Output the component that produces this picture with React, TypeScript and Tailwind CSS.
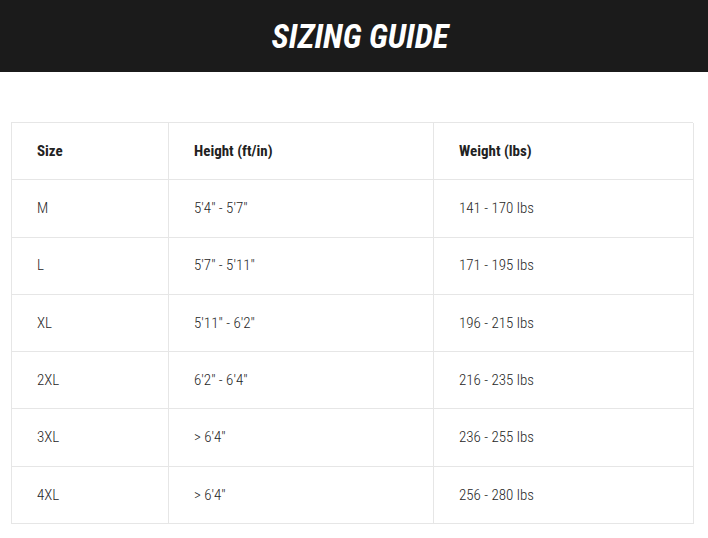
export default function App() {
  const rows = [
    ["M", "5'4\" - 5'7\"", "141 - 170 lbs"],
    ["L", "5'7\" - 5'11\"", "171 - 195 lbs"],
    ["XL", "5'11\" - 6'2\"", "196 - 215 lbs"],
    ["2XL", "6'2\" - 6'4\"", "216 - 235 lbs"],
    ["3XL", "> 6'4\"", "236 - 255 lbs"],
    ["4XL", "> 6'4\"", "256 - 280 lbs"],
  ];
  return (
    <div className="w-[708px] h-[538px] bg-white font-['Roboto',sans-serif] font-stretch-condensed">
      <div className="h-[72px] bg-[#1b1b1b] flex items-center justify-center pl-[12px]">
        <h1 className="text-white italic font-bold text-[33px] leading-none pt-[1px]">SIZING GUIDE</h1>
      </div>
      <div className="pt-[50px] pl-[11px]">
        <div className="w-[682px] border-t border-l border-[#e6e6e6] text-[15px] text-[#262626] font-[350]">
          <div className="grid grid-cols-[157px_265px_260px] h-[57.3px]">
            <div className="border-r border-b border-[#e6e6e6] pl-[25px] flex items-center font-bold text-[#222222]">Size</div>
            <div className="border-r border-b border-[#e6e6e6] pl-[25px] flex items-center font-bold text-[#222222]">Height (ft/in)</div>
            <div className="border-r border-b border-[#e6e6e6] pl-[25px] flex items-center font-bold text-[#222222]">Weight (lbs)</div>
          </div>
          {rows.map((r) => (
            <div key={r[0]} className="grid grid-cols-[157px_265px_260px] h-[57.3px]">
              {r.map((c, i) => (
                <div key={i} className="border-r border-b border-[#e6e6e6] pl-[25px] flex items-center">{c}</div>
              ))}
            </div>
          ))}
        </div>
      </div>
    </div>
  );
}
